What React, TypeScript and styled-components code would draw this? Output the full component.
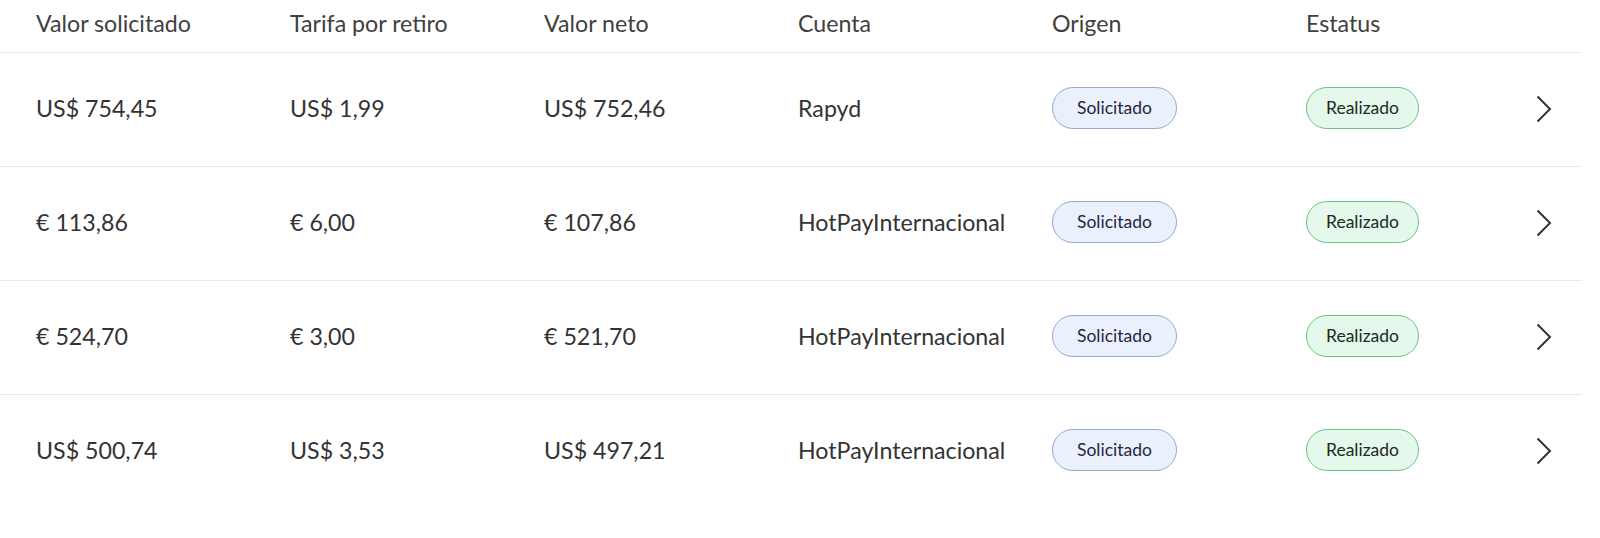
import React from 'react';
import styled, { createGlobalStyle } from 'styled-components';

const GlobalStyle = createGlobalStyle`
  body {
    margin: 0;
    background: #ffffff;
    font-family: Lato, 'Noto Sans', Arial, sans-serif;
  }
`;

type Withdrawal = {
  requested: string;
  fee: string;
  net: string;
  account: string;
};

const withdrawals: Withdrawal[] = [
  { requested: 'US$ 754,45', fee: 'US$ 1,99', net: 'US$ 752,46', account: 'Rapyd' },
  { requested: '€ 113,86', fee: '€ 6,00', net: '€ 107,86', account: 'HotPayInternacional' },
  { requested: '€ 524,70', fee: '€ 3,00', net: '€ 521,70', account: 'HotPayInternacional' },
  { requested: 'US$ 500,74', fee: 'US$ 3,53', net: 'US$ 497,21', account: 'HotPayInternacional' },
];

const headers = ['Valor solicitado', 'Tarifa por retiro', 'Valor neto', 'Cuenta', 'Origen', 'Estatus'];

const Table = styled.div`
  width: 1582px;
`;

const HeaderRow = styled.div`
  display: grid;
  grid-template-columns: repeat(6, 254px) 58px;
  height: 52px;
  border-bottom: 1px solid #e7e9eb;
`;

const HeaderCell = styled.div`
  display: flex;
  align-items: center;
  padding: 0 0 7px 36px;
  font-size: 23.2px;
  color: #404040;
  white-space: nowrap;
`;

const Row = styled.div`
  display: grid;
  grid-template-columns: repeat(6, 254px) 58px;
  height: 113px;
  border-bottom: 1px solid #e7e9eb;

  &:last-child {
    border-bottom: none;
  }
`;

const Cell = styled.div`
  display: flex;
  align-items: center;
  padding: 0 0 4px 36px;
  font-size: 23.2px;
  color: #333333;
  white-space: nowrap;
`;

const ActionCell = styled.div`
  display: flex;
  align-items: center;
  padding: 0 0 2px 12px;
  color: #333333;
`;

const tones = {
  info: { bg: '#ebf0fd', border: '#97a9d8', color: '#1e2940', pad: 24 },
  success: { bg: '#e4f8eb', border: '#6cc48b', color: '#1c2a21', pad: 19 },
};

const Badge = styled.span<{ $tone: keyof typeof tones }>`
  display: inline-flex;
  align-items: center;
  height: 42px;
  box-sizing: border-box;
  padding: 0 ${p => tones[p.$tone].pad}px;
  border-radius: 21px;
  border: 1.5px solid ${p => tones[p.$tone].border};
  background: ${p => tones[p.$tone].bg};
  color: ${p => tones[p.$tone].color};
  font-size: 17.5px;
`;

const Chevron = () => (
  <svg width="16" height="28" viewBox="0 0 16 28" fill="none">
    <polyline points="1.5,1.5 14,14 1.5,26.5" stroke="currentColor" strokeWidth="2" />
  </svg>
);

const App: React.FC = () => {
  return (
    <>
      <GlobalStyle />
      <Table>
        <HeaderRow>
          {headers.map(h => (
            <HeaderCell key={h}>{h}</HeaderCell>
          ))}
          <div />
        </HeaderRow>
        {withdrawals.map((w, i) => (
          <Row key={i}>
            <Cell>{w.requested}</Cell>
            <Cell>{w.fee}</Cell>
            <Cell>{w.net}</Cell>
            <Cell>{w.account}</Cell>
            <Cell>
              <Badge $tone="info">Solicitado</Badge>
            </Cell>
            <Cell>
              <Badge $tone="success">Realizado</Badge>
            </Cell>
            <ActionCell>
              <Chevron />
            </ActionCell>
          </Row>
        ))}
      </Table>
    </>
  );
};

export default App;
